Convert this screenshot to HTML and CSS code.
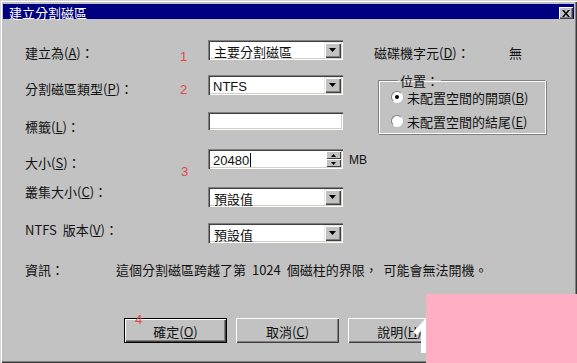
FILE: index.html
```html
<!DOCTYPE html>
<html lang="zh-Hant">
<head>
<meta charset="utf-8">
<title>建立分割磁區</title>
<link rel="stylesheet" href="styles.css">
</head>
<body>
<div class="window">
  <div class="titlebar">
    <span class="title">建立分割磁區</span>
    <span class="close"><svg width="8" height="7" viewBox="0 0 8 7"><path d="M0 0h2l2 2.5L6 0h2L5 3.5 8 7H6L4 4.5 2 7H0l3-3.5z" fill="#000"/></svg></span>
  </div>
  <div class="content">
    <div class="main">
      <div class="form">
        <div class="row r1">
          <span class="lbl l1">建立為(<u>A</u>)：</span>
          <span class="num n1">1</span>
          <div class="combo"><span class="val">主要分割磁區</span><span class="ddbtn"><svg width="7" height="4" viewBox="0 0 7 4"><path d="M0 0h7L3.5 4z" fill="#000"/></svg></span></div>
        </div>
        <div class="row r2">
          <span class="lbl l2">分割磁區類型(<u>P</u>)：</span>
          <span class="num n2">2</span>
          <div class="combo"><span class="val latin">NTFS</span><span class="ddbtn"><svg width="7" height="4" viewBox="0 0 7 4"><path d="M0 0h7L3.5 4z" fill="#000"/></svg></span></div>
        </div>
        <div class="row r3">
          <span class="lbl l3">標籤(<u>L</u>)：</span>
          <span class="num"></span>
          <div class="textbox"></div>
        </div>
        <div class="row r4">
          <span class="lbl l4">大小(<u>S</u>)：</span>
          <span class="num n3">3</span>
          <div class="spin"><span class="val latin">20480</span><span class="caret"></span><span class="spinbtns"><span class="sbtn"><svg width="5" height="3" viewBox="0 0 5 3"><path d="M0 3h5L2.5 0z" fill="#000"/></svg></span><span class="sbtn"><svg width="5" height="3" viewBox="0 0 5 3"><path d="M0 0h5L2.5 3z" fill="#000"/></svg></span></span></div>
          <span class="unit">MB</span>
        </div>
        <div class="row r5">
          <span class="lbl l5">叢集大小(<u>C</u>)：</span>
          <span class="num"></span>
          <div class="combo"><span class="val">預設值</span><span class="ddbtn"><svg width="7" height="4" viewBox="0 0 7 4"><path d="M0 0h7L3.5 4z" fill="#000"/></svg></span></div>
        </div>
        <div class="row r6">
          <span class="lbl l6">NTFS&nbsp; 版本(<u>V</u>)：</span>
          <span class="num"></span>
          <div class="combo"><span class="val">預設值</span><span class="ddbtn"><svg width="7" height="4" viewBox="0 0 7 4"><path d="M0 0h7L3.5 4z" fill="#000"/></svg></span></div>
        </div>
      </div>
      <div class="side">
        <div class="drive"><span class="drive-lbl">磁碟機字元(<u>D</u>)：</span><span>無</span></div>
        <fieldset class="group">
          <legend>位置：</legend>
          <div class="radio-row"><span class="radio checked"></span><span>未配置空間的開頭(<u>B</u>)</span></div>
          <div class="radio-row second"><span class="radio"></span><span>未配置空間的結尾(<u>E</u>)</span></div>
        </fieldset>
      </div>
    </div>
    <div class="info">
      <span class="info-lbl">資訊：</span>
      <span class="info-text">這個分割磁區跨越了第 1024 個磁柱的界限， 可能會無法開機。</span>
    </div>
    <div class="buttons">
      <span class="btn default"><span class="num n4">4</span>確定(<u>O</u>)</span>
      <span class="btn">取消(<u>C</u>)</span>
      <span class="btn">說明(<u>H</u>)</span>
    </div>
  </div>
  <svg class="mark" width="14" height="36" viewBox="0 0 14 36"><path d="M14 0 L0 15 L4 18 L8 14 L8 36 L14 36 Z" fill="#fff"/></svg>
  <div class="pink"></div>
</div>
</body>
</html>
```

FILE: styles.css
```css
* { box-sizing: border-box; }
html, body { margin: 0; padding: 0; }
body {
  width: 577px;
  height: 363px;
  overflow: hidden;
  background: #c2c2c2;
  font-family: "Noto Sans CJK TC", "Noto Sans", sans-serif;
  font-size: 13px;
  line-height: 15px;
  color: #111;
}
u { text-decoration: underline; text-underline-offset: 1px; }
.window {
  position: relative;
  width: 577px;
  height: 363px;
  background: #c2c2c2;
  padding: 4px 3px 3px 3px;
  box-shadow: inset 1px 1px 0 #d6d6d6, inset 2px 2px 0 #fff, inset -1px -1px 0 #3a3a3a, inset -2px -2px 0 #808080;
}
.titlebar {
  height: 15px;
  background: #000080;
  display: flex;
  align-items: center;
  justify-content: space-between;
  padding: 0 1px 0 6px;
}
.title { color: #fff; font-size: 13px; line-height: 15px; padding-top: 1px; }
.close {
  width: 14px;
  height: 12px;
  margin-top: 3px;
  background: #c2c2c2;
  display: flex;
  align-items: center;
  justify-content: center;
  box-shadow: inset 1px 1px 0 #fff, inset -1px -1px 0 #404040, inset -2px -2px 0 #808080;
}
.content { padding-left: 22px; }
.main { display: flex; }
.form { width: 349px; padding-top: 21px; }
.row {
  display: grid;
  grid-template-columns: 152px 31px 135px 31px;
  align-items: start;
}
.r1 { height: 35px; }
.r2 { height: 37px; }
.r3 { height: 37px; }
.r4 { height: 38px; }
.r5 { height: 36px; }
.r6 { height: 20px; }
.lbl { white-space: nowrap; }
.l1 { margin-top: 5px; }
.l2 { margin-top: 6px; }
.l3 { margin-top: 7px; }
.l4 { margin-top: 6px; }
.l5 { margin-top: -3px; }
.l6 { margin-top: -1px; }
.num {
  color: #e04646;
  font-family: "Liberation Sans", sans-serif;
  font-size: 13px;
  line-height: 12px;
  padding-left: 3px;
}
.n1 { margin-top: 11px; }
.n2 { margin-top: 9px; }
.n3 { margin-top: 17px; padding-left: 4px; }
.n4 { position: absolute; left: 11px; top: -4px; padding: 0; }
.combo, .spin, .textbox {
  height: 20px;
  background: #fff;
  display: flex;
  align-items: center;
  padding: 2px;
  box-shadow: inset 1px 1px 0 #808080, inset 2px 2px 0 #404040, inset -1px -1px 0 #fff, inset -2px -2px 0 #d4d0c8;
}
.textbox { height: 18px; }
.val { flex: 1; padding-left: 4px; padding-top: 2px; white-space: nowrap; }
.latin { font-family: "Liberation Sans", sans-serif; font-size: 13px; padding-left: 3px; }
.spin .val { flex: 0 0 auto; }
.caret { width: 1px; height: 14px; background: #000; margin-left: 1px; margin-top: 1px; }
.spinbtns { margin-left: auto; display: flex; flex-direction: column; width: 15px; height: 16px; }
.sbtn {
  flex: 1;
  background: #c2c2c2;
  display: flex;
  align-items: center;
  justify-content: center;
  box-shadow: inset 1px 1px 0 #fff, inset -1px -1px 0 #404040;
}
.ddbtn {
  width: 17px;
  height: 16px;
  background: #c2c2c2;
  display: flex;
  align-items: center;
  justify-content: center;
  box-shadow: inset 1px 1px 0 #e6e6e6, inset 2px 2px 0 #fff, inset -1px -1px 0 #404040, inset -2px -2px 0 #808080;
}
.unit { font-family: "Liberation Sans", sans-serif; font-size: 12px; padding-left: 6px; margin-top: 4px; }
.side { padding-top: 26px; }
.drive { display: flex; white-space: nowrap; }
.drive-lbl { width: 135px; }
.group {
  margin: 13px 0 0 4px;
  width: 168px;
  height: 61px;
  padding: 0 0 0 12px;
  border-style: solid;
  border-width: 1px;
  border-color: #808080 #fff #fff #808080;
  box-shadow: inset 1px 1px 0 #fff, 1px 1px 0 #808080;
}
.group legend { margin-left: 7px; padding: 0 2px; line-height: 15px; }
.radio-row { display: flex; align-items: center; gap: 4px; height: 18px; white-space: nowrap; }
.radio-row.second { margin-top: 6px; }
.radio {
  width: 12px;
  height: 12px;
  border-radius: 50%;
  background: #fff;
  border: 1px solid;
  border-color: #808080 #fff #fff #808080;
  position: relative;
}
.radio.checked::after {
  content: "";
  position: absolute;
  left: 3px;
  top: 3px;
  width: 4px;
  height: 4px;
  border-radius: 50%;
  background: #000;
}
.info { display: flex; margin-top: 19px; white-space: nowrap; }
.info-lbl { width: 91px; }
.info-text { word-spacing: 3px; }
.buttons { display: flex; gap: 9px; margin-top: 41px; padding-left: 99px; }
.btn {
  position: relative;
  width: 103px;
  height: 25px;
  display: flex;
  align-items: center;
  justify-content: center;
  padding-top: 2px;
  background: #c2c2c2;
  box-shadow: inset 1px 1px 0 #fff, inset -1px -1px 0 #404040, inset -2px -2px 0 #808080;
}
.btn.default {
  box-shadow: inset 0 0 0 1px #000, inset 2px 2px 0 #fff, inset -2px -2px 0 #404040, inset -3px -3px 0 #808080;
}
.mark { position: absolute; left: 413px; top: 317px; }
.pink {
  position: absolute;
  left: 426px;
  top: 294px;
  width: 151px;
  height: 69px;
  background: #ffafc4;
}
```
